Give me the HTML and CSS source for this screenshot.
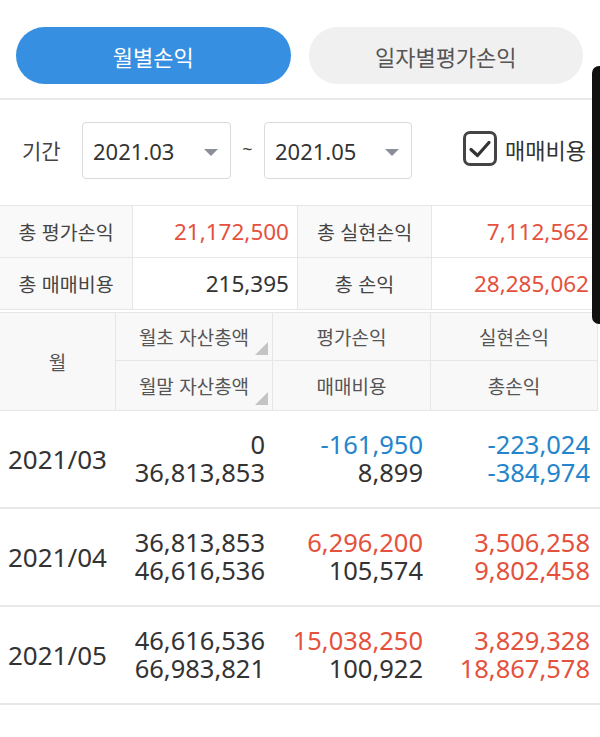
FILE: index.html
```html
<!DOCTYPE html>
<html lang="ko">
<head>
<meta charset="utf-8">
<link rel="stylesheet" href="styles.css">
</head>
<body>
<div class="page">
  <div class="tabs">
    <div class="tab active">월별손익</div>
    <div class="tab">일자별평가손익</div>
  </div>
  <div class="sep"></div>
  <div class="period">
    <span class="plabel">기간</span>
    <div class="select"><span>2021.03</span><i class="caret"></i></div>
    <span class="tilde">~</span>
    <div class="select s2"><span>2021.05</span><i class="caret"></i></div>
    <div class="check">
      <span class="box"><svg width="24" height="20" viewBox="0 0 24 20"><path d="M3 10.5 L9.5 16.5 L21 3.5" fill="none" stroke="#333" stroke-width="3.2" stroke-linecap="round" stroke-linejoin="round"/></svg></span>
      <span class="clabel">매매비용</span>
    </div>
  </div>

  <div class="summary">
    <div class="lbl">총 평가손익</div>
    <div class="val red">21,172,500</div>
    <div class="lbl">총 실현손익</div>
    <div class="val red">7,112,562</div>
    <div class="lbl">총 매매비용</div>
    <div class="val">215,395</div>
    <div class="lbl">총 손익</div>
    <div class="val red">28,285,062</div>
  </div>

  <div class="head">
    <div class="hc month">월</div>
    <div class="hc sort">월초 자산총액<i class="tri"></i></div>
    <div class="hc">평가손익</div>
    <div class="hc">실현손익</div>
    <div class="hc sort">월말 자산총액<i class="tri"></i></div>
    <div class="hc">매매비용</div>
    <div class="hc">총손익</div>
  </div>

  <div class="row">
    <div class="m">2021/03</div>
    <div class="n"><span>0</span><span>36,813,853</span></div>
    <div class="n"><span class="blue">-161,950</span><span>8,899</span></div>
    <div class="n"><span class="blue">-223,024</span><span class="blue">-384,974</span></div>
  </div>
  <div class="row">
    <div class="m">2021/04</div>
    <div class="n"><span>36,813,853</span><span>46,616,536</span></div>
    <div class="n"><span class="red">6,296,200</span><span>105,574</span></div>
    <div class="n"><span class="red">3,506,258</span><span class="red">9,802,458</span></div>
  </div>
  <div class="row">
    <div class="m">2021/05</div>
    <div class="n"><span>46,616,536</span><span>66,983,821</span></div>
    <div class="n"><span class="red">15,038,250</span><span>100,922</span></div>
    <div class="n"><span class="red">3,829,328</span><span class="red">18,867,578</span></div>
  </div>
</div>
<div class="scrollbar"></div>
</body>
</html>
```
FILE: styles.css
```css
* { box-sizing: border-box; }
html, body { margin: 0; padding: 0; background: #fff; }
body {
  width: 600px;
  height: 737px;
  overflow: hidden;
  font-family: "Noto Sans", "Noto Sans CJK KR", sans-serif;
  color: #333;
  position: relative;
}
.tabs {
  display: flex;
  gap: 18px;
  padding: 27px 17px 0 16px;
}
.tab {
  flex: 1;
  height: 57px;
  border-radius: 29px;
  background: #f0f0f0;
  color: #555;
  font-size: 22px;
  display: flex;
  align-items: center;
  justify-content: center;
  font-family: "Noto Sans CJK KR", sans-serif;
}
.tab.active {
  background: #368fe0;
  color: #fff;
}
.sep {
  margin-top: 14px;
  height: 2px;
  background: #e8e8e8;
}
.period {
  display: flex;
  padding: 22px 0 0 22px;
  height: 105px;
  align-items: flex-start;
}
.plabel {
  font-family: "Noto Sans CJK KR", sans-serif;
  font-size: 21px;
  color: #444;
  width: 60px;
  line-height: 57px;
}
.select {
  width: 149px;
  height: 57px;
  border: 1.5px solid #dadada;
  border-radius: 4px;
  display: flex;
  align-items: center;
  justify-content: space-between;
  padding: 0 12px 0 10px;
  font-size: 22px;
  color: #333;
}
.caret {
  width: 0; height: 0;
  border-left: 7.5px solid transparent;
  border-right: 7.5px solid transparent;
  border-top: 7px solid #8a8f98;
  margin-top: 4px;
}
.tilde {
  width: 33px;
  text-align: center;
  font-size: 18px;
  line-height: 54px;
  color: #444;
}
.s2 { width: 148px; }
.check {
  margin-left: 51px;
  display: flex;
  align-items: center;
  height: 57px;
  margin-top: -2px;
}
.box {
  width: 34px; height: 35px;
  border: 3px solid #444;
  border-radius: 7px;
  display: flex;
  align-items: center;
  justify-content: center;
}
.clabel {
  margin-left: 8px;
  font-family: "Noto Sans CJK KR", sans-serif;
  font-size: 22px;
  color: #333;
}
.summary {
  display: grid;
  grid-template-columns: 133px 165px 134px 166px;
  grid-auto-rows: 52px;
  width: 598px;
  border-top: 1px solid #e6e6e6;
}
.summary > div {
  border-right: 1px solid #e6e6e6;
  border-bottom: 1px solid #e6e6e6;
  display: flex;
  align-items: center;
}
.lbl {
  justify-content: center;
  background: #f9f9f9;
  font-family: "Noto Sans CJK KR", sans-serif;
  font-size: 19.5px;
  color: #444;
}
.val {
  justify-content: flex-end;
  padding-right: 8px;
  font-size: 22.5px;
  color: #333;
}
.red { color: #e4513c; }
.blue { color: #2585cc; }
.head {
  margin-top: 2px;
  display: grid;
  grid-template-columns: 116px 157px 158px 167px;
  grid-template-rows: 48px 49px;
  width: 598px;
  border-top: 1px solid #e6e6e6;
  border-bottom: 1px solid #e6e6e6;
}
.hc {
  background: #f8f8f8;
  border-right: 1px solid #e6e6e6;
  border-bottom: 1px solid #e6e6e6;
  display: flex;
  align-items: center;
  justify-content: center;
  font-family: "Noto Sans CJK KR", sans-serif;
  font-size: 19px;
  color: #555;
  position: relative;
}
.head .hc:nth-child(n+5) { border-bottom: none; }
.month { grid-row: 1 / span 2; border-bottom: none; }
.tri {
  position: absolute;
  right: 4px;
  bottom: 5px;
  width: 0; height: 0;
  border-left: 13px solid transparent;
  border-bottom: 13px solid #c4c4c4;
}
.row {
  display: grid;
  grid-template-columns: 116px 157px 158px 167px;
  width: 600px;
  height: 98px;
  border-bottom: 2px solid #e8e8e8;
  align-items: center;
}
.m {
  padding-left: 8px;
  font-size: 26px;
  color: #333;
  line-height: 28px;
}
.n {
  display: flex;
  flex-direction: column;
  align-items: flex-end;
  padding-right: 8px;
  font-size: 25.5px;
  line-height: 28px;
  color: #333;
  margin-top: -2px;
}
.scrollbar {
  position: absolute;
  top: 66px;
  right: 0;
  width: 8px;
  height: 258px;
  background: #111;
  border-radius: 7px 0 0 7px;
}
```
